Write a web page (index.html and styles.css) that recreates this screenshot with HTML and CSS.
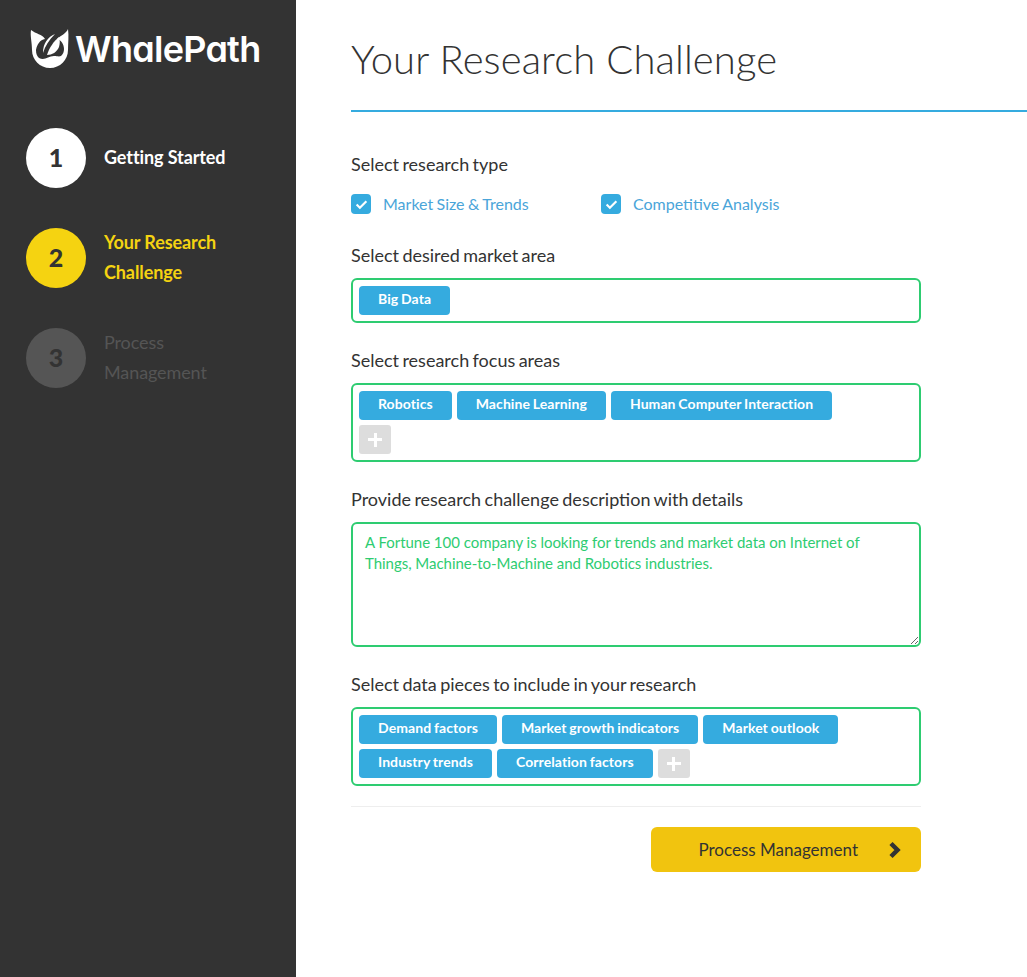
FILE: index.html
```html
<!DOCTYPE html>
<html lang="en">
<head>
    <meta charset="UTF-8">
    <title>WhalePath - Your Research Challenge</title>
    <link rel="stylesheet" href="styles.css">
</head>
<body>
    <div class="sidebar">
        <div class="logo">
            <svg class="logo-mark" width="40" height="41" viewBox="0 0 40 41">
                <path fill="#fff" d="M1 2 C6 6 12 6 15 11 C10 12 7 16 6 22 C6 26 7 28 9 30 C15 33 18 28 24 28 C27 28 29 29 31 28 C33 26 34 24 34 21 C34 16 31 12 27 11 C31 7 36 6 38 1 C39 8 38 15 38 22 C38 32 30 40 20 40 C10 40 2 32 2 22 C2 14 0 8 1 2 Z"/>
                <path fill="#fff" d="M25 6 C18 9 13 15 13 25 C15 18 19 12 25 6 Z"/>
                <path fill="#fff" d="M29 9 C24 13 19 20 17 27 C22 27 27 24 29 19 C30 15 30 12 29 9 Z"/>
            </svg>
            <span class="logo-text">WhalePath</span>
        </div>
        <div class="step step-done">
            <div class="step-num">1</div>
            <div class="step-label">Getting Started</div>
        </div>
        <div class="step step-active">
            <div class="step-num">2</div>
            <div class="step-label">Your Research Challenge</div>
        </div>
        <div class="step step-todo">
            <div class="step-num">3</div>
            <div class="step-label">Process Management</div>
        </div>
    </div>

    <div class="main">
        <h1 class="title">Your Research Challenge</h1>
        <div class="form">
            <div class="label label-first">Select research type</div>
            <div class="checks">
                <div class="check check-wide">
                    <span class="box">
                        <svg width="13" height="11" viewBox="0 0 12 10"><path d="M1.500 5 L4.500 8 L10.500 2" fill="none" stroke="#fff" stroke-width="2"/></svg>
                    </span>
                    Market Size &amp; Trends
                </div>
                <div class="check">
                    <span class="box">
                        <svg width="13" height="11" viewBox="0 0 12 10"><path d="M1.500 5 L4.500 8 L10.500 2" fill="none" stroke="#fff" stroke-width="2"/></svg>
                    </span>
                    Competitive Analysis
                </div>
            </div>

            <div class="label">Select desired market area</div>
            <div class="field">
                <span class="tag">Big Data</span>
            </div>

            <div class="label">Select research focus areas</div>
            <div class="field field-narrow">
                <span class="tag">Robotics</span>
                <span class="tag">Machine Learning</span>
                <span class="tag">Human Computer Interaction</span>
                <span class="add"></span>
            </div>

            <div class="label">Provide research challenge description with details</div>
            <textarea class="desc">A Fortune 100 company is looking for trends and market data on Internet of Things, Machine-to-Machine and Robotics industries.</textarea>

            <div class="label">Select data pieces to include in your research</div>
            <div class="field">
                <span class="tag">Demand factors</span>
                <span class="tag">Market growth indicators</span>
                <span class="tag">Market outlook</span>
                <span class="tag">Industry trends</span>
                <span class="tag">Correlation factors</span>
                <span class="add"></span>
            </div>

            <div class="actions">
                <button class="next">
                    <span>Process Management</span>
                    <svg width="15" height="18" viewBox="0 0 15 18"><path d="M3 2.500 L9.500 9 L3 15.500" fill="none" stroke="#333" stroke-width="4.500"/></svg>
                </button>
            </div>
        </div>
    </div>
</body>
</html>
```

FILE: styles.css
```css
* {
    box-sizing: border-box;
}
html, body {
    height: 100%;
}
body {
    margin: 0;
    display: flex;
    font-family: Lato, "Liberation Sans", sans-serif;
    color: #333;
    background: #fff;
    overflow: hidden;
}
.sidebar {
    width: 296px;
    flex-shrink: 0;
    background: #333;
    padding: 28px 26px 0;
}
.logo {
    display: flex;
    align-items: center;
    height: 41px;
    margin: 0 0 59px 4px;
}
.logo-text {
    font-family: Inter, sans-serif;
    font-feature-settings: "cv11";
    font-size: 36px;
    font-weight: 600;
    letter-spacing: -0.75px;
    color: #fff;
    margin-left: 5px;
}
.step {
    display: flex;
    margin-bottom: 40px;
}
.step-num {
    width: 60px;
    height: 60px;
    flex-shrink: 0;
    border-radius: 50%;
    display: flex;
    align-items: center;
    justify-content: center;
    padding-bottom: 2px;
    font-size: 25px;
    font-weight: 900;
    color: #333;
}
.step-label {
    margin: -1px 0 0 18px;
    width: 130px;
    font-size: 18px;
    line-height: 30px;
    letter-spacing: -0.1px;
}
.step-done .step-num {
    background: #fff;
}
.step-done .step-label {
    color: #fff;
    font-weight: 700;
    width: 160px;
    margin-top: 14px;
}
.step-active .step-num {
    background: #f5d311;
}
.step-active .step-label {
    color: #f5d311;
    font-weight: 700;
}
.step-todo .step-num {
    background: #555;
}
.step-todo .step-label {
    color: #555;
}
.main {
    flex: 1;
    padding-left: 55px;
}
.title {
    margin: 0;
    height: 112px;
    padding-top: 34px;
    border-bottom: 2px solid #35abdf;
    font-size: 40px;
    line-height: 50px;
    font-weight: 300;
    letter-spacing: 0.1px;
    color: #333;
}
.form {
    width: 570px;
}
.label {
    font-size: 18px;
    line-height: 24px;
    word-spacing: -1.2px;
    margin: 25px 0 11px;
}
.label-first {
    margin-top: 40px;
}
.checks {
    display: flex;
    margin: 18px 0 29px;
}
.check {
    display: flex;
    align-items: center;
    font-size: 16px;
    word-spacing: -0.7px;
    color: #4aa5d9;
    line-height: 20px;
}
.check-wide {
    width: 250px;
}
.box {
    width: 20px;
    height: 20px;
    border-radius: 4px;
    background: #35abdf;
    display: flex;
    align-items: center;
    justify-content: center;
    margin-right: 12px;
}
.field {
    border: 2px solid #2ecc71;
    border-radius: 6px;
    padding: 6px;
    display: flex;
    flex-wrap: wrap;
    gap: 5px;
}
/* the plus button drops to its own line here */
.field-narrow {
    padding-right: 60px;
}
.tag {
    height: 29px;
    padding: 0 19px;
    border-radius: 4px;
    background: #35abdf;
    color: #fff;
    font-size: 14px;
    font-weight: 700;
    line-height: 25px;
    letter-spacing: 0.08px;
    word-spacing: -0.7px;
}
.add {
    width: 32px;
    height: 29px;
    border-radius: 3px;
    background: #ddd;
    display: block;
    position: relative;
}
.add::before, .add::after {
    content: "";
    position: absolute;
    background: #fff;
}
.add::before {
    left: 9px;
    top: 13px;
    width: 14px;
    height: 3px;
}
.add::after {
    left: 14.500px;
    top: 8px;
    width: 3px;
    height: 14px;
}
.desc {
    display: block;
    width: 100%;
    height: 125px;
    border: 2px solid #2ecc71;
    border-radius: 6px;
    padding: 8px 12px;
    font-family: Lato, "Liberation Sans", sans-serif;
    font-size: 15px;
    line-height: 21px;
    letter-spacing: -0.03px;
    color: #2ecc71;
    outline: none;
}
.actions {
    margin-top: 20px;
    padding-top: 20px;
    border-top: 1px solid #eee;
    display: flex;
    justify-content: flex-end;
}
.next {
    width: 270px;
    height: 45px;
    border: 0;
    border-radius: 6px;
    background: #f1c40f;
    display: flex;
    align-items: center;
    justify-content: flex-end;
    gap: 30px;
    padding: 0 18px 0 0;
    font-family: Lato, "Liberation Sans", sans-serif;
    font-size: 17px;
    color: #333;
}
```
